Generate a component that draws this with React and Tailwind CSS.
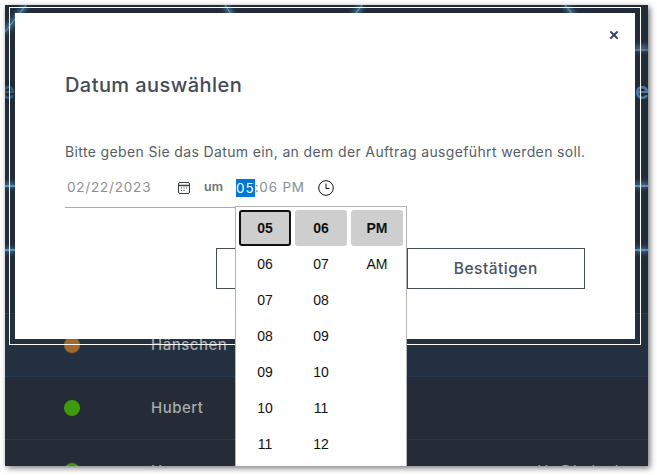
import { X } from 'lucide-react';

const HOURS = ['06', '07', '08', '09', '10', '11'];
const MINUTES = ['07', '08', '09', '10', '11', '12'];

export default function App() {
  return (
    <div className="w-[657px] h-[475px] bg-white pt-[5px] pl-[5px] pr-[9px] pb-[9px] overflow-hidden font-['Inter',sans-serif]">
      <div className="relative w-[643px] h-[461px] overflow-hidden bg-[#212c38] shadow-[2px_2px_6px_rgba(0,0,0,0.55)]">
        {/* Backdrop behind the dialog */}
        <div className="h-[309px] relative border-b border-[#2a3f55]">
          <Backdrop />
        </div>
        <Row dot="bg-[#a06a2c]" name="Hänschen" tone="bg-[#22303f]" />
        <Row dot="bg-[#3f9b0b]" name="Hubert" tone="bg-[#252b37]" />
        <Row dot="bg-[#3f9b0b]" name="Hu" tone="bg-[#252b37]" mail="Hu@hub.ch" />

        {/* Dialog */}
        <div className="absolute left-[4px] top-[2px] w-[632px] h-[338px] border border-white p-[5px]">
          <div className="relative w-[620px] h-[326px] bg-white pl-[50px] pr-[50px] pt-[59px] text-[#555e68]">
            <button className="absolute right-[15px] top-[16px] text-[#3b4a5a]">
              <X className="w-3 h-3" strokeWidth={4} />
            </button>
            <h2 className="text-[20px] leading-[26px] font-medium tracking-[0.43px] text-[#434c57]">Datum auswählen</h2>
            <p className="mt-[44px] text-[14px] leading-[20px] tracking-[0.365px] whitespace-nowrap">
              Bitte geben Sie das Datum ein, an dem der Auftrag ausgeführt werden soll.
            </p>
            <Picker />
            <div className="mt-[40px] ml-[151px] flex gap-[12px]">
              <button className="w-[179px] h-[41px] border border-[#434c57]" />
              <button className="w-[179px] h-[41px] border border-[#434c57] text-[15.5px] font-medium tracking-[0.5px] text-[#4a5360]">Bestätigen</button>
            </div>
          </div>
        </div>
      </div>
    </div>
  );
}

function Picker() {
  return (
    <div className="relative mt-[8px] h-[38px] w-[170px] border-b border-[#aaaaaa]">
      <div className="flex items-center w-max h-[35px] text-[13.5px] tracking-[0.8px] text-[#8b8f94] whitespace-nowrap">
        <span className="ml-[2px] w-[110px] shrink-0">02/22/2023</span>
        <svg width="14" height="14" viewBox="0 0 14 14" fill="none" className="shrink-0 text-[#3a3f46]">
          <rect x="1.5" y="1.5" width="11" height="11" rx="1.5" stroke="currentColor" />
          <path d="M1.500 4.500h11" stroke="currentColor" strokeWidth="1.500" />
          <path d="M4 7h1M6.500 7h1M9 7h1M4 9.500h1M6.500 9.500h1" stroke="currentColor" />
        </svg>
        <span className="ml-[13px] text-[12.5px] font-semibold tracking-normal text-[#6d7177]">um</span>
        <span className="ml-[13px] h-[18px] leading-[18px] bg-[#0078d7] text-white tracking-[1px]">05</span>
        <span>:06&nbsp;PM</span>
        <svg width="16" height="16" viewBox="0 0 16 16" fill="none" className="ml-[13px] shrink-0 text-[#111111]">
          <circle cx="8" cy="8" r="7.300" stroke="currentColor" />
          <path d="M8 3.500V8.500H11.500" stroke="currentColor" />
        </svg>
      </div>
      <TimeList />
    </div>
  );
}

function TimeList() {
  return (
    <div className="absolute left-[170px] top-[36px] w-[172px] h-[262px] bg-white border border-[#b5b5b5] p-[3px] flex gap-[4px] font-['Liberation_Sans',sans-serif] text-[14px] text-[#111111]">
      <Column selected="05" items={HOURS} ring />
      <Column selected="06" items={MINUTES} />
      <Column selected="PM" items={['AM']} />
    </div>
  );
}

function Column({ selected, items, ring }) {
  return (
    <div className="w-[52px] flex flex-col">
      <div className={`h-[36px] rounded-[3px] bg-[#cecece] grid place-items-center font-bold ${ring ? 'border-2 border-[#111111]' : ''}`}>
        {selected}
      </div>
      {items.map((t) => (
        <div key={t} className="h-[36px] grid place-items-center">{t}</div>
      ))}
    </div>
  );
}

function Row({ dot, name, tone, mail }) {
  return (
    <div className={`relative h-[63px] flex items-center border-b border-[#253b52] ${tone}`}>
      <span className={`ml-[59px] w-[16px] h-[16px] rounded-full ${dot}`} />
      <span className="ml-[71px] text-[15px] font-medium tracking-[0.5px] text-[#a9abad]">{name}</span>
      {mail && <span className="ml-auto mr-[24px] text-[15px] tracking-[0.4px] text-[#a9abad]">{mail}</span>}
    </div>
  );
}

function Backdrop() {
  return (
    <svg width="643" height="309" className="absolute inset-0">
      <defs>
        <filter id="glow"><feGaussianBlur stdDeviation="2.5" /></filter>
      </defs>
      <g stroke="#4f86b8" strokeWidth="4" filter="url(#glow)" fill="none">
        <path d="M21 0L0 27M220 0L228 12M357 0L348 12M560 0L570 12M630 43H643M630 180H643M0 180H10M0 245H10M630 245H643" />
      </g>
      <g stroke="#9fb6cc" strokeWidth="1" fill="none" opacity="0.7">
        <path d="M21 0L0 27M220 0L228 12M357 0L348 12M560 0L570 12M630 45H643" />
      </g>
      <path d="M0 181H10M630 181H643M0 245H10M630 245H643" stroke="#5b8fc4" strokeWidth="2" />
      <text x="-4" y="94" fontSize="24" fontWeight="600" fill="#34597e" fontFamily="Inter, sans-serif">e</text>
      <text x="630" y="94" fontSize="24" fontWeight="600" fill="#4a7cab" fontFamily="Inter, sans-serif">es</text>
    </svg>
  );
}
